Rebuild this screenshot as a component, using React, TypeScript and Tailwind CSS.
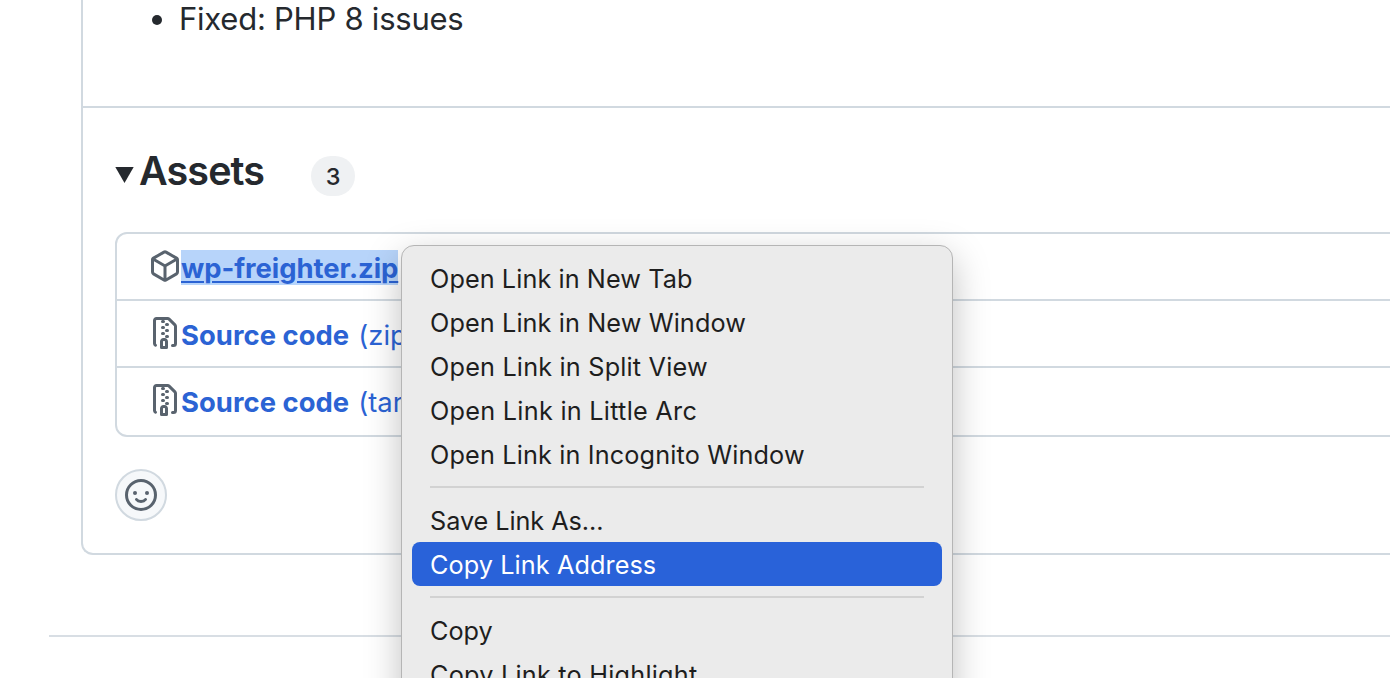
import React from "react";

type IconProps = { path: string; className?: string };

function Icon({ path, className = "" }: IconProps) {
  return (
    <svg viewBox="0 0 16 16" className={`h-8 w-8 shrink-0 text-[#59636e] ${className}`} fill="currentColor">
      <path d={path} />
    </svg>
  );
}

const packagePath =
  "m8.878.392 5.25 3.045c.54.314.872.89.872 1.514v6.098a1.75 1.75 0 0 1-.872 1.514l-5.25 3.045a1.75 1.75 0 0 1-1.756 0l-5.25-3.045A1.75 1.75 0 0 1 1 11.049V4.951c0-.624.332-1.201.872-1.514L7.122.392a1.75 1.75 0 0 1 1.756 0ZM7.875 1.69l-4.63 2.685L8 7.133l4.755-2.758-4.63-2.685a.248.248 0 0 0-.25 0ZM2.5 5.677v5.372c0 .09.047.171.125.216l4.625 2.683V8.432Zm6.25 8.271 4.625-2.683a.25.25 0 0 0 .125-.216V5.677L8.75 8.432Z";
const fileZipPath =
  "M3.5 1.75v11.5c0 .09.048.173.126.217a.75.75 0 0 1-.752 1.298A1.748 1.748 0 0 1 2 13.25V1.75C2 .784 2.784 0 3.75 0h5.586c.464 0 .909.185 1.237.513l2.914 2.914c.329.328.513.773.513 1.237v8.586A1.75 1.75 0 0 1 12.25 15h-.5a.75.75 0 0 1 0-1.5h.5a.25.25 0 0 0 .25-.25V4.664a.25.25 0 0 0-.073-.177L9.513 1.573a.25.25 0 0 0-.177-.073H7.25a.75.75 0 0 1 0 1.5h-.5a.75.75 0 0 1 0-1.5h-3a.25.25 0 0 0-.25.25Zm3.75 8.75h.5c.966 0 1.75.784 1.75 1.75v3a.75.75 0 0 1-.75.75h-2.5a.75.75 0 0 1-.75-.75v-3c0-.966.784-1.75 1.75-1.75ZM6 5.25a.75.75 0 0 1 .75-.75h.5a.75.75 0 0 1 0 1.5h-.5A.75.75 0 0 1 6 5.25Zm.75 2.25h.5a.75.75 0 0 1 0 1.5h-.5a.75.75 0 0 1 0-1.5ZM8 6.75A.75.75 0 0 1 8.75 6h.5a.75.75 0 0 1 0 1.5h-.5A.75.75 0 0 1 8 6.75ZM8.75 3h.5a.75.75 0 0 1 0 1.5h-.5a.75.75 0 0 1 0-1.5ZM8 9.75A.75.75 0 0 1 8.75 9h.5a.75.75 0 0 1 0 1.5h-.5A.75.75 0 0 1 8 9.75Zm-1 2.5v2.25h1v-2.25a.25.25 0 0 0-.25-.25h-.5a.25.25 0 0 0-.25.25Z";

function Smiley() {
  return (
    <svg viewBox="0 0 16 16" className="h-8 w-8 text-[#59636e]" fill="none" stroke="currentColor" strokeWidth="1.5">
      <circle cx="8" cy="8" r="7.25" />
      <path d="M5.75 10.25s.7 1 2.25 1 2.25-1 2.25-1" strokeLinecap="round" />
      <circle cx="5" cy="7" r="1" fill="currentColor" stroke="none" />
      <circle cx="11" cy="7" r="1" fill="currentColor" stroke="none" />
    </svg>
  );
}

function SourceRow({ kind, last = false }: { kind: string; last?: boolean }) {
  return (
    <li className={`flex h-[67px] items-start pl-8 pt-4 ${last ? "" : "border-b-2 border-[#d1d9e0]"}`}>
      <Icon path={fileZipPath} />
      <a className="whitespace-nowrap text-[27.4px] leading-9 text-[#2b63d4]">
        <span className="font-bold tracking-[0.05px]">Source code</span>
        <span className="ml-[9px]">({kind})</span>
      </a>
    </li>
  );
}

function MenuItem({ label, tracking, active = false }: { label: string; tracking: string; active?: boolean }) {
  return (
    <div
      className={`mx-2.5 flex h-11 shrink-0 items-center whitespace-nowrap rounded-lg pl-[18px] pt-0.5 text-[25.25px] ${tracking} ${
        active ? "bg-[#2962d9] text-white" : "text-[#1e1e1e]"
      }`}
    >
      <span className="leading-[38px]">{label}</span>
    </div>
  );
}

function Separator() {
  return <div className="mx-7 my-2.5 h-0.5 shrink-0 bg-[#d2d2d2]" />;
}

export default function App() {
  return (
    <div className="relative h-[678px] w-full overflow-hidden bg-white font-['Inter',sans-serif] text-[#25292e]">
      <main className="ml-[81px] h-[555px] w-[1400px] rounded-bl-xl border-b-2 border-l-2 border-[#d1d9e0]">
        <section className="flex h-[108px] items-start border-b-2 border-[#d1d9e0] pl-[69px]">
          <span className="mt-[15px] h-2.5 w-2.5 rounded-full bg-[#25292e]" />
          <p className="ml-[17px] whitespace-nowrap text-[31px] leading-[38px] tracking-[-0.24px]">
            Fixed: PHP 8 issues
          </p>
        </section>
        <section className="pl-8">
          <div className="flex h-[124px] items-start">
            <svg viewBox="0 0 20 16" className="mt-[59px] h-4 w-5" fill="currentColor">
              <path d="M0.3 0h18.4L9.5 16z" />
            </svg>
            <h3 className="ml-1 mt-[39px] w-[172px] text-[39.5px] font-semibold leading-[48px] tracking-[-0.9px]">
              Assets
            </h3>
            <span className="mt-12 flex h-10 w-11 items-center justify-center rounded-full bg-[#eff1f3] pt-px text-[23.5px] font-medium">
              3
            </span>
          </div>
          <ul className="rounded-xl border-2 border-[#d1d9e0]">
            <li className="flex h-[67px] items-start border-b-2 border-[#d1d9e0] pl-8 pt-4">
              <Icon path={packagePath} />
              <a className="h-[35px] w-[217px] whitespace-nowrap bg-[#b7d4fa] text-[27.4px] font-bold leading-9 tracking-[-0.04px] text-[#2b63d4] underline decoration-2 underline-offset-[3px]">
                wp-freighter.zip
              </a>
            </li>
            <SourceRow kind="zip" />
            <SourceRow kind="tar.gz" last />
          </ul>
          <button className="mt-8 flex h-[52px] w-[52px] items-center justify-center rounded-full border-2 border-[#d1d9e0] bg-[#f6f8fa]">
            <Smiley />
          </button>
        </section>
      </main>
      <hr className="ml-[49px] mt-20 border-t-2 border-[#d8dee4]" />
      <div className="absolute left-[401px] top-[245px] flex h-[500px] w-[552px] flex-col rounded-[13px] border border-[#b5b5b5] bg-[#ebebeb] pt-2.5 shadow-[0_12px_36px_rgba(0,0,0,0.25)]">
        <MenuItem label="Open Link in New Tab" tracking="tracking-[0.07px]" />
        <MenuItem label="Open Link in New Window" tracking="tracking-[0.1px]" />
        <MenuItem label="Open Link in Split View" tracking="tracking-[0.18px]" />
        <MenuItem label="Open Link in Little Arc" tracking="tracking-[0.26px]" />
        <MenuItem label="Open Link in Incognito Window" tracking="tracking-[0.14px]" />
        <Separator />
        <MenuItem label="Save Link As..." tracking="tracking-[-0.06px]" />
        <MenuItem label="Copy Link Address" tracking="tracking-[0.08px]" active />
        <Separator />
        <MenuItem label="Copy" tracking="tracking-normal" />
        <MenuItem label="Copy Link to Highlight" tracking="tracking-[0.22px]" />
      </div>
    </div>
  );
}
